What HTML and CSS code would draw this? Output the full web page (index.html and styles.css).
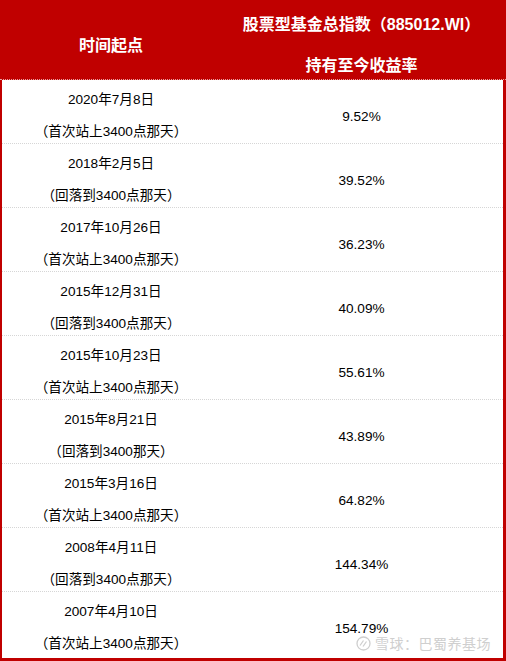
FILE: index.html
```html
<!DOCTYPE html>
<html lang="zh">
<head>
<meta charset="utf-8">
<link rel="stylesheet" href="styles.css">
</head>
<body>
<div class="sheet">
  <div class="head">
    <div class="hcell left">时间起点</div>
    <div class="hcell right">股票型基金总指数（885012.WI）<br>持有至今收益率</div>
  </div>
  <div class="row"><div class="date">2020年7月8日<br>（首次站上3400点那天）</div><div class="val">9.52%</div></div>
  <div class="row"><div class="date">2018年2月5日<br>（回落到3400点那天）</div><div class="val">39.52%</div></div>
  <div class="row"><div class="date">2017年10月26日<br>（首次站上3400点那天）</div><div class="val">36.23%</div></div>
  <div class="row"><div class="date">2015年12月31日<br>（回落到3400点那天）</div><div class="val">40.09%</div></div>
  <div class="row"><div class="date">2015年10月23日<br>（首次站上3400点那天）</div><div class="val">55.61%</div></div>
  <div class="row"><div class="date">2015年8月21日<br>（回落到3400那天）</div><div class="val">43.89%</div></div>
  <div class="row"><div class="date">2015年3月16日<br>（首次站上3400点那天）</div><div class="val">64.82%</div></div>
  <div class="row"><div class="date">2008年4月11日<br>（回落到3400点那天）</div><div class="val">144.34%</div></div>
  <div class="row last"><div class="date">2007年4月10日<br>（首次站上3400点那天）</div><div class="val">154.79%</div></div>
  <div class="mark">
    <svg class="logo" width="15" height="15" viewBox="0 0 15 15"><circle cx="7.5" cy="7.5" r="6.5" fill="none" stroke="#cfcfcf" stroke-width="1.3"/><path d="M4 9.5 L7.5 4.5 M7 10.5 L10.5 5.5" stroke="#cfcfcf" stroke-width="1.3" fill="none"/></svg>
    <span>雪球：巴蜀养基场</span>
  </div>
</div>
</body>
</html>
```

FILE: styles.css
```css
html, body {
  margin: 0;
  padding: 0;
  background: #fff;
}
.sheet {
  position: relative;
  width: 506px;
  height: 661px;
  box-sizing: border-box;
  border-left: 2px solid #c00000;
  border-right: 3px solid #c00000;
  border-bottom: 3px solid #c00000;
  font-family: "Liberation Sans", "Noto Sans CJK SC", sans-serif;
  color: #000;
}
.head {
  display: grid;
  grid-template-columns: 218px 1fr;
  height: 80px;
  background: #c00000;
  color: #fff;
  font-weight: bold;
  font-size: 16px;
  border-bottom: 1px dotted #e9a0a0;
  box-sizing: border-box;
  margin-left: -2px;
  margin-right: -3px;
  padding-left: 2px;
  padding-right: 3px;
}
.hcell {
  text-align: center;
  line-height: 41px;
}
.hcell.left {
  padding-top: 25px;
}
.hcell.right {
  padding-top: 4px;
  white-space: nowrap;
}
.row {
  display: grid;
  grid-template-columns: 218px 1fr;
  height: 64px;
  box-sizing: border-box;
  border-bottom: 1px dotted #d6d6d6;
  font-size: 13.6px;
}
.row.last {
  height: 65px;
  border-bottom: none;
}
.date {
  text-align: center;
  line-height: 32px;
  padding-top: 4px;
}
.val {
  display: flex;
  align-items: center;
  justify-content: center;
  padding-top: 4px;
}
.mark {
  position: absolute;
  right: 12px;
  bottom: 5px;
  display: flex;
  align-items: center;
  gap: 4px;
  color: #cfcfcf;
  font-size: 14px;
  letter-spacing: 0.5px;
}
.logo {
  display: block;
}
```
